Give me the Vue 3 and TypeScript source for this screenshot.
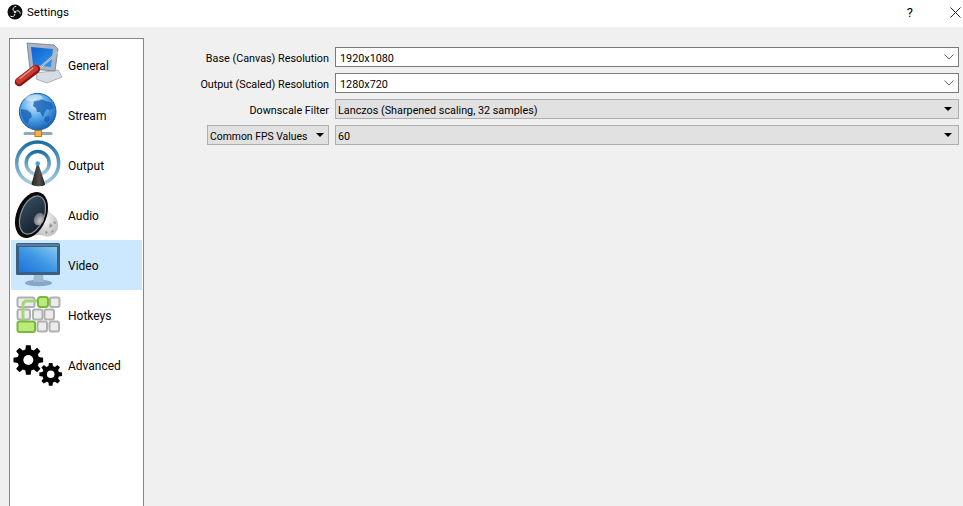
<script setup lang="ts">
const navItems = ['General', 'Stream', 'Output', 'Audio', 'Video', 'Hotkeys', 'Advanced']

// builds a cog outline, teeth go round the centre
function gearPath(cx: number, cy: number, outer: number, root: number, teeth: number) {
  const step = (Math.PI * 2) / teeth
  const pts: string[] = []
  for (let i = 0; i < teeth; i++) {
    const a = i * step - Math.PI / 2
    const corners: [number, number][] = [
      [root, a - step * 0.34],
      [outer, a - step * 0.2],
      [outer, a + step * 0.2],
      [root, a + step * 0.34],
    ]
    for (const [r, t] of corners) {
      pts.push(`${(cx + r * Math.cos(t)).toFixed(2)} ${(cy + r * Math.sin(t)).toFixed(2)}`)
    }
  }
  return `M${pts.join('L')}Z`
}

const bigGear = gearPath(14.3, 19, 15, 11, 8)
const smallGear = gearPath(36.7, 33.3, 11.5, 8.5, 8)
</script>

<template>
  <div class="window">
    <header class="titlebar">
      <svg class="app-logo" viewBox="0 0 16 16" width="16" height="16">
        <circle cx="8" cy="8" r="7.500" fill="#0d0d0d" />
        <g fill="none" stroke="#fff" stroke-width="1" stroke-linecap="round">
          <path d="M6.200 6.400C5.400 4.600 6.500 2.700 8.800 2.400" />
          <path d="M9.800 6.800C11.700 6.300 13 7.500 13.200 9.300" />
          <path d="M7.800 10.400C7.700 12.200 6 13.300 3.900 12.400" />
        </g>
        <circle cx="8" cy="8" r="1.300" fill="#fff" opacity=".85" />
      </svg>
      <span class="title">Settings</span>
      <span class="help">?</span>
      <svg class="close" viewBox="0 0 11 11" width="11" height="11">
        <path d="M.5.5l10 10M10.500.5l-10 10" stroke="#222" stroke-width="1" fill="none" />
      </svg>
    </header>

    <main class="content">
      <nav class="sidebar">
        <div v-for="item in navItems" :key="item" class="nav-item" :class="{ active: item === 'Video' }">
          <svg class="nav-icon" viewBox="0 0 48 48" width="48" height="48">
            <template v-if="item === 'General'">
              <defs>
                <linearGradient id="gScreen" x1="0" y1="0" x2="1" y2="1">
                  <stop offset="0" stop-color="#0f5bd0" />
                  <stop offset="1" stop-color="#2f9bf0" />
                </linearGradient>
              </defs>
              <path d="M23 32l21-3 4 7-15 6-11-4z" fill="#d5dce4" stroke="#9aa3ad" stroke-width=".8" />
              <path d="M13 2l27 2 4 4-3 22-25-2z" fill="#a9b4c4" stroke="#69768a" stroke-width=".8" />
              <path d="M17 6l22 2-2 18-18-2z" fill="url(#gScreen)" />
              <path d="M43 12L21 31" stroke="#d3d7db" stroke-width="2.200" stroke-linecap="round" />
              <path d="M43 12L21 31" stroke="#6c7278" stroke-width=".6" />
              <path d="M22 28L5 41" stroke="#8c1410" stroke-width="8.500" stroke-linecap="round" />
              <path d="M21 27.500L5 40" stroke="#c93a30" stroke-width="6" stroke-linecap="round" />
              <path d="M19 27L6 37.500" stroke="#ef9a90" stroke-width="1.200" stroke-linecap="round" />
            </template>

            <template v-else-if="item === 'Stream'">
              <defs>
                <radialGradient id="sGlobe" cx=".4" cy=".3" r=".8">
                  <stop offset="0" stop-color="#cdeafc" />
                  <stop offset=".5" stop-color="#4fa3e8" />
                  <stop offset="1" stop-color="#0c4ea8" />
                </radialGradient>
              </defs>
              <path d="M24 36v6" stroke="#8c98a4" stroke-width="2.500" />
              <path d="M11 42.500h26" stroke="#9aa5b0" stroke-width="3" stroke-linecap="round" />
              <rect x="21" y="39" width="6.500" height="6.500" fill="#f8b53a" stroke="#c9781a" />
              <circle cx="23.700" cy="20.700" r="18.300" fill="url(#sGlobe)" stroke="#1a5cab" />
              <g fill="#1a62b4" opacity=".8">
                <path d="M20 10l7-2 5 2 6 2 2 5-4 2-3-1-2 3-2 5-3-5-3 0-1-4-3-2z" />
                <path d="M7 18l6 1 4 3 1 4-3 2-1 5-3-2-4-7z" />
                <path d="M31 26l4-1 1 3-3 4-3-2z" />
              </g>
              <ellipse cx="20" cy="7" rx="9" ry="3.500" fill="#fff" opacity=".4" />
            </template>

            <template v-else-if="item === 'Output'">
              <defs>
                <linearGradient id="oRing" x1="0" y1="0" x2="0" y2="1">
                  <stop offset="0" stop-color="#1b6f9f" />
                  <stop offset="1" stop-color="#a9cfe2" />
                </linearGradient>
                <linearGradient id="oCone" x1="0" y1="0" x2="1" y2="0">
                  <stop offset="0" stop-color="#222" />
                  <stop offset=".6" stop-color="#55504a" />
                  <stop offset="1" stop-color="#1d1d1d" />
                </linearGradient>
              </defs>
              <circle cx="23.700" cy="22" r="21" fill="none" stroke="url(#oRing)" stroke-width="3.500" />
              <circle cx="23.700" cy="22" r="11.500" fill="none" stroke="url(#oRing)" stroke-width="3.500" />
              <path d="M23 23h1.500L31 43c1 3-13 3-13.500 0z" fill="url(#oCone)" />
              <circle cx="23.700" cy="22.500" r="2.300" fill="#39a2f0" />
            </template>

            <template v-else-if="item === 'Audio'">
              <defs>
                <linearGradient id="aCone" x1="0" y1="0" x2="1" y2="1">
                  <stop offset="0" stop-color="#3a5064" />
                  <stop offset="1" stop-color="#0f1a24" />
                </linearGradient>
                <radialGradient id="aMag" cx=".6" cy=".6" r=".7">
                  <stop offset="0" stop-color="#f4f4f4" />
                  <stop offset=".7" stop-color="#b8b8b8" />
                  <stop offset="1" stop-color="#555" />
                </radialGradient>
                <radialGradient id="aDome" cx=".65" cy=".6" r=".7">
                  <stop offset="0" stop-color="#c8c8c8" />
                  <stop offset="1" stop-color="#5c6670" />
                </radialGradient>
              </defs>
              <path d="M26 2L36 22c4 2 9 6 8 14-1 7-8 11-13 9-6-2-12-1-18 1z" fill="url(#aMag)" />
              <path d="M36 32l3 3-4 2zM41 30l1 3-3-1zM31 40l3 1-2 2zM38 39l2 1-3 2z" fill="#666" opacity=".6" />
              <ellipse cx="17.500" cy="24" rx="15" ry="24" transform="rotate(22 17.500 24)" fill="#0a0a0a" />
              <ellipse cx="18.500" cy="24" rx="11.500" ry="20" transform="rotate(22 18.500 24)" fill="url(#aCone)" stroke="#8a949c" stroke-width="1.200" />
              <ellipse cx="25" cy="28" rx="5" ry="6.500" transform="rotate(22 25 28)" fill="url(#aDome)" />
            </template>

            <template v-else-if="item === 'Video'">
              <defs>
                <linearGradient id="vScreen" x1="0" y1="1" x2="1" y2="0">
                  <stop offset="0" stop-color="#1e73d8" />
                  <stop offset=".5" stop-color="#3d97e4" />
                  <stop offset="1" stop-color="#86c8ee" />
                </linearGradient>
              </defs>
              <ellipse cx="24.500" cy="42" rx="13.500" ry="3.200" fill="#86a8c8" />
              <path d="M20 34h9l1 7H19z" fill="#9fbbd4" />
              <rect x="2" y="2" width="44" height="32" rx="1.500" fill="#3d5f80" />
              <rect x="3" y="3" width="42" height="2" fill="#5c7c9c" />
              <rect x="5" y="6" width="38" height="25" fill="url(#vScreen)" />
            </template>

            <template v-else-if="item === 'Hotkeys'">
              <g fill="#ececec" stroke="#b0b0b0" stroke-width="2">
                <rect x="3.500" y="6.500" width="17" height="9.500" rx="2" />
                <rect x="36" y="6.500" width="9.500" height="9.500" rx="2" />
                <rect x="3.500" y="18.500" width="12.500" height="10" rx="2" />
                <rect x="19" y="18.500" width="9.500" height="10" rx="2" />
                <rect x="30.500" y="18.500" width="9.500" height="10" rx="2" />
                <rect x="23.500" y="30.500" width="9.500" height="10" rx="2" />
                <rect x="35.500" y="30.500" width="9.500" height="10" rx="2" />
              </g>
              <path d="M9 31V14c0-3 2-4 4-4h11" fill="none" stroke="#a5d67a" stroke-width="3" />
              <g fill="#bdea7c" stroke="#78b83c" stroke-width="2">
                <rect x="24" y="6" width="10" height="10" rx="2.500" />
                <rect x="3.500" y="30.500" width="17.500" height="10.500" rx="2" />
              </g>
            </template>

            <template v-else>
              <path :d="bigGear" fill="#000" />
              <circle cx="14.300" cy="19" r="5" fill="#fff" />
              <path :d="smallGear" fill="#000" />
              <circle cx="36.700" cy="33.300" r="3.800" fill="#fff" />
            </template>
          </svg>
          <span class="nav-label">{{ item }}</span>
        </div>
      </nav>

      <section class="form">
        <label class="form-label">Base (Canvas) Resolution</label>
        <div class="combo">
          <span>1920x1080</span>
          <svg viewBox="0 0 10 6" width="10" height="6"><path d="M.5.5L5 5 9.500.5" fill="none" stroke="#666" /></svg>
        </div>

        <label class="form-label">Output (Scaled) Resolution</label>
        <div class="combo">
          <span>1280x720</span>
          <svg viewBox="0 0 10 6" width="10" height="6"><path d="M.5.5L5 5 9.500.5" fill="none" stroke="#666" /></svg>
        </div>

        <label class="form-label">Downscale Filter</label>
        <div class="combo grey">
          <span>Lanczos (Sharpened scaling, 32 samples)</span>
          <i class="caret" />
        </div>

        <div class="combo grey fps-type">
          <span>Common FPS Values</span>
          <i class="caret" />
        </div>
        <div class="combo grey">
          <span>60</span>
          <i class="caret" />
        </div>
      </section>
    </main>
  </div>
</template>

<style scoped>
.window {
  display: flex;
  flex-direction: column;
  height: 506px;
  overflow: hidden;
  background: #f0f0f0;
  color: #000;
  font-family: Roboto, "Open Sans", sans-serif;
  font-size: 12px;
}

.titlebar {
  display: flex;
  align-items: center;
  flex: none;
  height: 27px;
  padding: 0 2px 3px 7px;
  box-sizing: border-box;
  background: #fff;
}

.title {
  margin-left: 4px;
  font-size: 11.5px;
}

.help {
  margin-left: auto;
  margin-right: 37px;
  font-size: 13px;
}

.content {
  display: flex;
  flex: 1;
  min-height: 0;
  padding: 11px 4px 0 9px;
}

.sidebar {
  flex: none;
  width: 135px;
  padding: 1px;
  box-sizing: border-box;
  background: #fff;
  border: 1px solid #828790;
  border-bottom: none;
}

.nav-item {
  display: flex;
  align-items: center;
  height: 50px;
  padding-left: 3px;
}

.nav-item.active {
  background: #cce8ff;
}

.nav-icon {
  flex: none;
  overflow: visible;
}

.nav-label {
  margin-left: 6px;
  padding-top: 2px;
}

.form {
  flex: 1;
  display: grid;
  grid-template-columns: 185px 1fr;
  grid-auto-rows: 20px;
  gap: 6px;
  padding-top: 9px;
  align-content: start;
  font-size: 10.8px;
}

.form-label {
  align-self: center;
  justify-self: end;
  padding-top: 2px;
  white-space: nowrap;
}

.combo {
  display: flex;
  align-items: center;
  justify-content: space-between;
  padding: 2px 4px 0;
  box-sizing: border-box;
  white-space: nowrap;
  background: #fff;
  border: 1px solid #7a7a7a;
}

.combo svg {
  margin-top: -2px;
}

.combo.grey {
  padding: 2px 6px 0 2px;
  background: #e1e1e1;
  border-color: #adadad;
}

.combo.fps-type {
  width: 122px;
  justify-self: end;
  padding-right: 4px;
  font-size: 10.4px;
}

.caret {
  width: 0;
  height: 0;
  margin-top: -2px;
  border-left: 4px solid transparent;
  border-right: 4px solid transparent;
  border-top: 4px solid #000;
}
</style>

<style>
html,
body {
  margin: 0;
  background: #f0f0f0;
}
</style>
